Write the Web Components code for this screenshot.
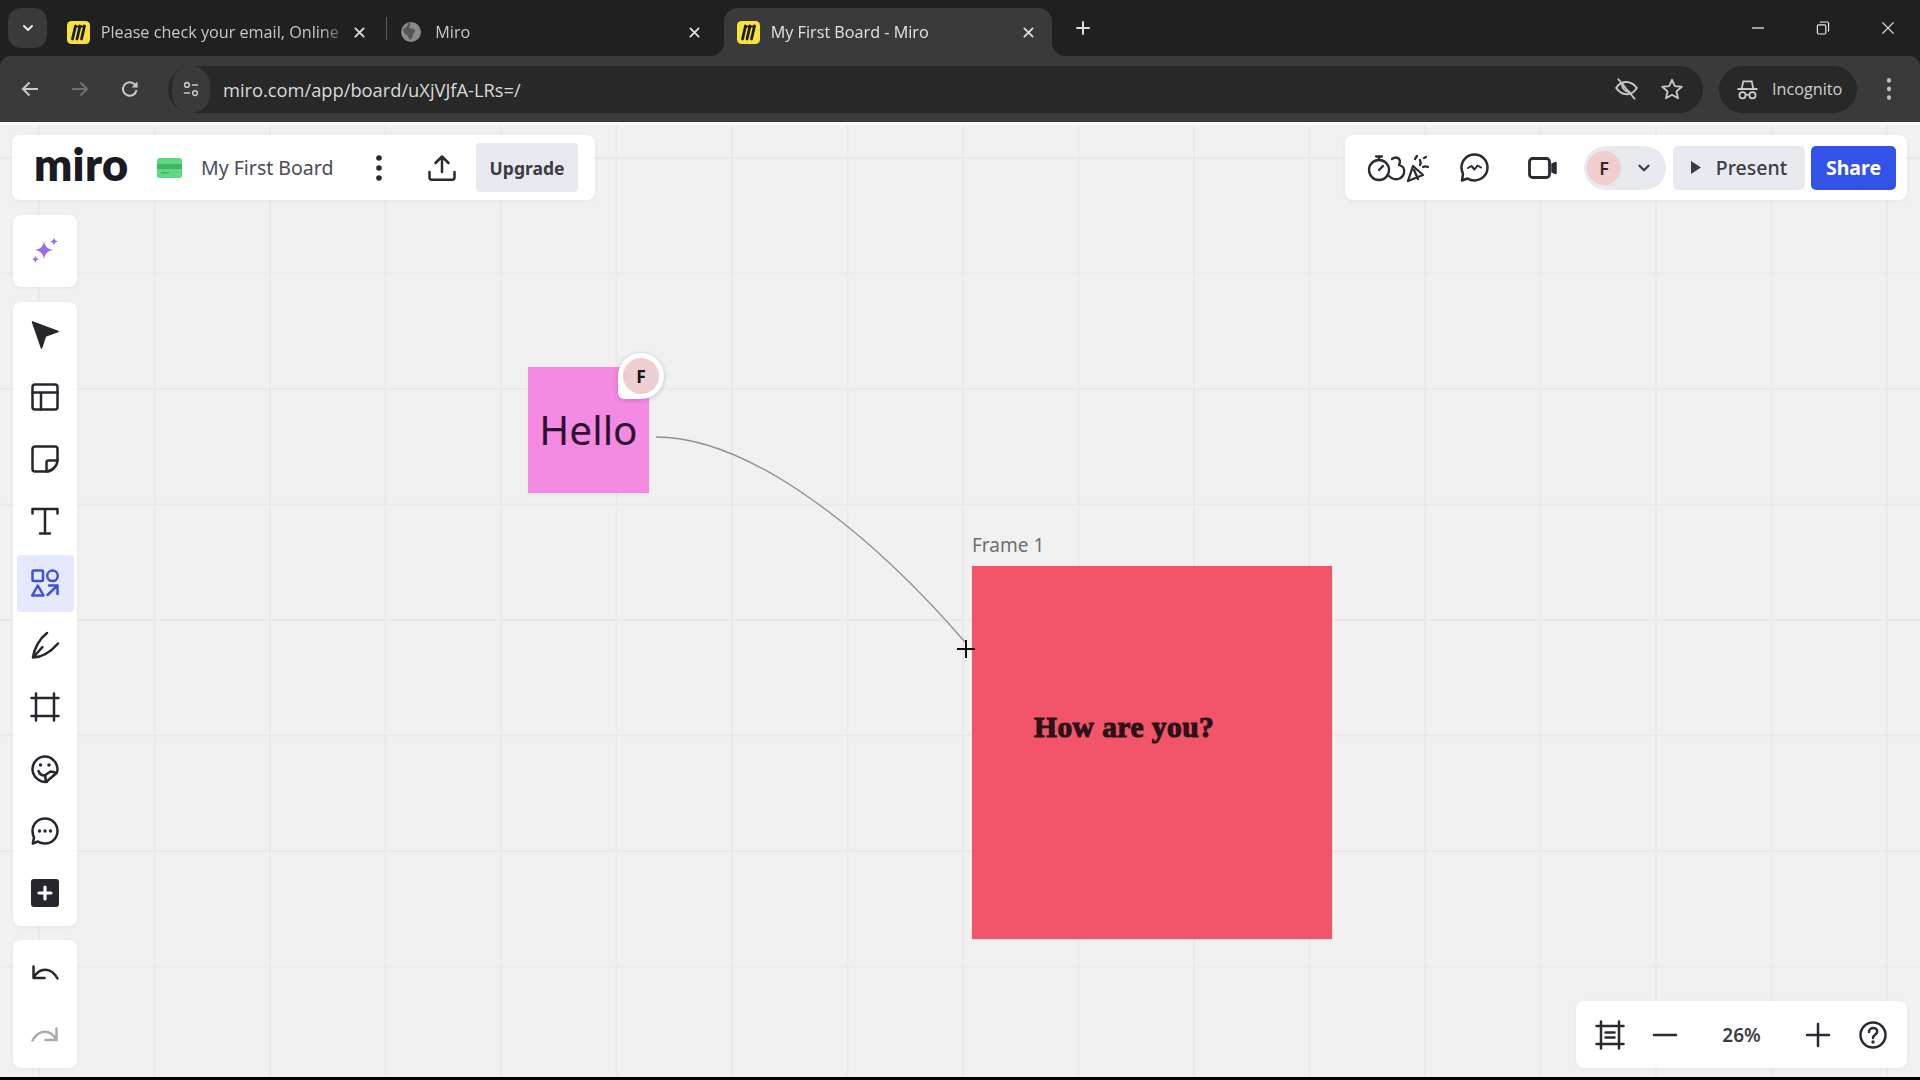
<!DOCTYPE html>
<html lang="en"><head><meta charset="utf-8"><title>My First Board - Miro</title>
<style>
html,body{margin:0;padding:0;height:100%;background:#000;overflow:hidden}
body{display:flex;flex-direction:column;width:1920px;height:1080px;font-family:"Noto Sans","Open Sans",sans-serif}
</style></head><body>
<browser-frame></browser-frame>
<miro-board></miro-board>
<screen-edge></screen-edge>
<script>
const S='fill="none" stroke="currentColor" stroke-width="2.5" stroke-linecap="round" stroke-linejoin="round"';
const ICONS={
 chevron:['0 0 20 20',`<path d="M5 7.5l5 5 5-5" ${S}/>`],
 x:['0 0 20 20',`<path d="M4.5 4.5l11 11M15.5 4.5l-11 11" ${S}/>`],
 plusThin:['0 0 20 20',`<path d="M10 2.5v15M2.5 10h15" ${S}/>`],
 minimize:['0 0 20 20',`<path d="M2.5 10h15" fill="none" stroke="currentColor" stroke-width="1.6"/>`],
 restore:['0 0 20 20',`<g fill="none" stroke="currentColor" stroke-width="1.5"><rect x="3" y="6" width="10.5" height="11.5" rx="1.5"/><path d="M6.5 3.5a1 1 0 0 1 1-1h8a1.5 1.5 0 0 1 1.500 1.500v9a1 1 0 0 1-1 1"/></g>`],
 close:['0 0 20 20',`<path d="M3 3l14 14M17 3L3 17" fill="none" stroke="currentColor" stroke-width="1.6"/>`],
 back:['0 0 20 20',`<path d="M18 10H3M9.500 3.500L3 10l6.500 6.500" fill="none" stroke="currentColor" stroke-width="2"/>`],
 forward:['0 0 20 20',`<path d="M2 10h15M10.500 3.500L17 10l-6.500 6.500" fill="none" stroke="currentColor" stroke-width="2"/>`],
 reload:['0 0 20 20',`<path d="M16.500 11a6.800 6.800 0 1 1-1.600-5.500L17 8" fill="none" stroke="currentColor" stroke-width="2"/><path d="M17.500 2.500V8.500H11.500z" fill="currentColor"/>`],
 tune:['0 0 20 20',`<g fill="none" stroke="currentColor" stroke-width="1.700"><circle cx="5.500" cy="5.500" r="2.600"/><path d="M11 5.500h7M2 14.500h7"/><circle cx="14.500" cy="14.500" r="2.600"/></g>`],
 eyeoff:['0 0 24 24',`<g fill="none" stroke="currentColor" stroke-width="1.800" stroke-linecap="round"><path d="M2 11c4-6.500 13-8 19 0-4 7-13 8.500-19 0z"/><path d="M8 6.500c-1.500 3.500 2 8.500 6 8"/><path d="M4 3l15 18"/></g>`],
 star:['0 0 24 24',`<path d="M12 2.800l2.800 6.300 6.900.7-5.200 4.600 1.500 6.800-6-3.500-6 3.500 1.500-6.800-5.200-4.600 6.900-.7z" fill="none" stroke="currentColor" stroke-width="1.900" stroke-linejoin="round"/>`],
 incognito:['0 0 24 24',`<g fill="none" stroke="currentColor" stroke-width="1.800"><path d="M6 11l1.600-7.500h8.800L18 11"/><path d="M1.500 11.500h21" stroke-width="2"/><circle cx="6.800" cy="18" r="3.200"/><circle cx="17.200" cy="18" r="3.200"/><path d="M10 17.500h4"/></g>`],
 dots:['0 0 8 28',`<g fill="currentColor"><circle cx="4" cy="4" r="2.800"/><circle cx="4" cy="14" r="2.800"/><circle cx="4" cy="24" r="2.800"/></g>`],
 upload:['0 0 28 26',`<path d="M14 17V2M7.500 8L14 1.500 20.500 8M1.500 17v5.500a2.200 2.200 0 0 0 2.200 2.200h20.600a2.200 2.200 0 0 0 2.200-2.200V17" ${S}/>`],
 sparkle:['0 0 28 28',`<g fill="#9a6cf5"><path d="M13 4c1 5.500 3.500 8 9 9-5.500 1-8 3.500-9 9-1-5.500-3.500-8-9-9 5.500-1 8-3.500 9-9z"/><path d="M23 0.500c.4 2.500 1.500 3.600 4 4-2.500.4-3.600 1.500-4 4-.4-2.500-1.500-3.600-4-4 2.500-.4 3.600-1.500 4-4z"/><path d="M4.500 18.500c.4 2.300 1.400 3.300 3.700 3.700-2.300.4-3.300 1.400-3.700 3.700-.4-2.300-1.400-3.300-3.700-3.700 2.300-.4 3.300-1.400 3.700-3.700z"/></g>`],
 cursor:['0 0 28 28',`<path d="M1.500 1L27 10.500 14.500 15 10.500 27z" fill="currentColor" stroke="currentColor" stroke-width="1.500" stroke-linejoin="round"/>`],
 template:['0 0 28 28',`<g ${S}><rect x="1.500" y="1.500" width="25" height="25" rx="2.500"/><path d="M1.500 9.500h25M10 9.500v17"/></g>`],
 sticky:['0 0 28 28',`<g ${S}><path d="M4 1.500h20a2.500 2.500 0 0 1 2.500 2.500v11c0 6-5.500 11.500-11.500 11.500H4A2.500 2.500 0 0 1 1.500 24V4A2.500 2.500 0 0 1 4 1.500z"/><path d="M26.500 15.500H17.500a2 2 0 0 0-2 2v9"/></g>`],
 text:['0 0 28 28',`<path d="M1.500 6.500V2h25v4.500M14 2v24M9 26.500h10" ${S}/>`],
 shapes:['0 0 28 28',`<g ${S}><rect x="1.500" y="1.500" width="10.500" height="10.500" rx="1"/><circle cx="21.500" cy="6.800" r="5.300"/><path d="M6.800 16.500l5.700 10H1.200z"/><path d="M16.500 26L26.500 16.500M18 16.500h8.500V25"/></g>`],
 pen:['0 0 28 28',`<path d="M2 26.500C3 18 8 8 16 2M2 26.500c9 0 18-6 25-14M2 26.500l9.500-10.500" ${S}/>`],
 frame:['0 0 28 28',`<path d="M5 0.500v27M23 0.500v27M0.500 5h27M0.500 23h27" ${S}/>`],
 sticker:['0 0 28 28',`<g ${S}><path d="M15 27C7.500 27 1.500 21 1.500 14S7.500 1.500 14 1.500 26.500 7.500 26.500 14c0 1.500-.2 2.500-.6 3.700L15 27z"/><path d="M7.500 16c1 3 3.500 4.500 6 4.500l6-4 5 1"/><path d="M14.500 20.500c-.5 3 0 5 1.500 6.200"/></g><circle cx="9.500" cy="10" r="1.700" fill="currentColor"/><circle cx="18" cy="10" r="1.700" fill="currentColor"/>`],
 comment:['0 0 28 28',`<path d="M14 1.500C21 1.500 26.500 7 26.500 14S21 26.500 14 26.500c-3 0-5.500-.8-7-2L1.800 26.500 3 20.500C2 18.500 1.500 16.500 1.500 14 1.500 7 7 1.500 14 1.500z" ${S}/><g fill="currentColor"><circle cx="8.500" cy="14" r="1.700"/><circle cx="14" cy="14" r="1.700"/><circle cx="19.500" cy="14" r="1.700"/></g>`],
 plusbox:['0 0 28 28',`<rect width="28" height="28" rx="3" fill="currentColor"/><path d="M14 8v12M8 14h12" stroke="#fff" stroke-width="3.200" stroke-linecap="round"/>`],
 undo:['0 0 28 28',`<path d="M2.500 7.500V19h11M2.500 18.500C9 8 20 8 26.500 19.500" ${S}/>`],
 redo:['0 0 28 28',`<path d="M25.500 7.500V19h-11M25.500 18.500C19 8 8 8 1.500 19.500" ${S}/>`],
 fit:['0 0 28 28',`<path d="M5 0.500v27M23 0.500v27M0.500 5h27M0.500 23h27M9.500 11.500h9M9.500 16.500h9" ${S}/>`],
 minus:['0 0 28 28',`<path d="M3 14h22" ${S}/>`],
 plus:['0 0 28 28',`<path d="M3 14h22M14 3v22" ${S}/>`],
 help:['0 0 28 28',`<circle cx="14" cy="14" r="12.500" ${S}/><path d="M10 11c0-2.500 2-4 4.200-4 2.300 0 4 1.500 4 3.500 0 3.300-4.200 3.200-4.200 6.500" ${S}/><circle cx="14" cy="21" r="1.700" fill="currentColor"/>`],
 reactions:['0 0 61 28',`<g fill="none" stroke="currentColor" stroke-width="2.300" stroke-linecap="round" stroke-linejoin="round"><circle cx="11" cy="16" r="10"/><path d="M11 6V2.500M8 2.500h6M11 16l4-4"/><path d="M24 5c4-3 8-1 8 3l-1 3c4 1 6 4 5 8-1 5-6 7-10 6-2-.5-4-2-5-3"/><path d="M40 27l5-15 10 9zM46 16l4 9M52 11c1-2 1-3 0-5M55 13c2-1 3-1 5 0"/><path d="M47 5l2-3M56 4l2-1"/></g>`],
 chat:['0 0 29 29',`<path d="M14.500 1.500c7.300 0 13 5.700 13 13s-5.700 13-13 13c-2.500 0-5-.7-7-2l-5.500 2 1-6.500c-.800-2-1.500-4-1.500-6.500 0-7.300 5.700-13 13-13z" ${S}/><path d="M8 15l3.500-2 3 3.500 3-4 3.500 2" fill="none" stroke="currentColor" stroke-width="2" stroke-linecap="round" stroke-linejoin="round"/>`],
 video:['0 0 29 22',`<rect x="1.500" y="1.500" width="20" height="19" rx="3" fill="none" stroke="currentColor" stroke-width="2.800"/><path d="M24 7l4-1.500v11L24 15z" fill="currentColor" stroke="currentColor" stroke-width="1.500" stroke-linejoin="round"/>`],
 play:['0 0 10 13',`<path d="M0 0l10 6.500L0 13z" fill="currentColor"/>`],
 boardmark:['0 0 25 20',`<rect width="25" height="20" rx="2.500" fill="#62d884"/><rect y="6" width="25" height="5" fill="#3fb565"/><rect x="4" y="14" width="8" height="1.500" fill="#3fb565"/>`],
 mirofav:['0 0 23 23',`<rect width="23" height="23" rx="4.500" fill="#f6e33b"/><path d="M8.500 5L5.500 18M13 5l-3 13M17.500 5l-3 13" stroke="#1d1a10" stroke-width="2.800" stroke-linecap="round" fill="none"/><path d="M7 5.500h11" stroke="#1d1a10" stroke-width="1.800"/>`],
 globe:['0 0 20 20',`<circle cx="10" cy="10" r="10" fill="#8a8a8a"/><path d="M2 7c3-1 5-4 6-6.500 2 .5 2 3 0 4.500 1 2 5 1 6 3.500 1 2-2 2-2 4.500 0 2-2 5-3.500 5-.5-2-1-4-3-5-2-1-3.500-3-3.500-5.500z" fill="#555"/>`]
};
class UiIcon extends HTMLElement{
 connectedCallback(){
  const n=this.getAttribute('name'),w=this.getAttribute('w')||28,h=this.getAttribute('h')||w;
  const [vb,body]=ICONS[n];
  const r=this.shadowRoot||this.attachShadow({mode:'open'});
  r.innerHTML=`<style>:host{display:inline-flex;flex:none;line-height:0}svg{display:block;overflow:visible}</style><svg width="${w}" height="${h}" viewBox="${vb}" preserveAspectRatio="none">${body}</svg>`;
 }
}
customElements.define('ui-icon',UiIcon);

class ChromeTab extends HTMLElement{
 constructor(){super();const r=this.attachShadow({mode:'open'});
  r.innerHTML=`<style>
  :host{display:flex;align-items:center;flex:none;width:328px;height:48px;box-sizing:border-box;padding:0 13px 0 12px;position:relative;color:#c8c8c8;font:16.2px "Open Sans","Noto Sans",sans-serif;border-radius:14px 14px 0 0}
  :host([active]){background:#3a3a3a;color:#e2e2e2;padding-left:13px}
  :host([active])::before,:host([active])::after{content:"";position:absolute;bottom:0;width:14px;height:14px}
  :host([active])::before{left:-14px;background:radial-gradient(circle at 0 0,transparent 14px,#3a3a3a 14.5px)}
  :host([active])::after{right:-14px;background:radial-gradient(circle at 100% 0,transparent 14px,#3a3a3a 14.5px)}
  .t{flex:1;min-width:0;margin-left:11px;white-space:nowrap;overflow:hidden;-webkit-mask-image:linear-gradient(90deg,#000 88%,transparent 100%);mask-image:linear-gradient(90deg,#000 88%,transparent 100%)}
  .x{flex:none;color:#dcdcdc;width:20px;display:flex;justify-content:center}
  </style><slot name="icon"></slot><span class="t"><slot></slot></span><span class="x"><ui-icon name="x" w="15"></ui-icon></span>`;}
}
customElements.define('chrome-tab',ChromeTab);

class BrowserFrame extends HTMLElement{
 constructor(){super();const r=this.attachShadow({mode:'open'});
  r.innerHTML=`<style>
  :host{display:block;flex:none;background:#202020;font-family:"Open Sans","Noto Sans",sans-serif}
  .strip{height:56px;display:flex;align-items:flex-end;padding-left:8px;box-sizing:border-box;gap:2.75px}
  .drop{width:39px;height:40px;margin:0 5px 8px 0;background:#3a3a3a;border-radius:13px;display:flex;align-items:center;justify-content:center;color:#e8e8e8;flex:none}
  .sep{flex:none;width:1px;height:23px;background:#5c5c5c;margin-bottom:16px}
  .sep.hidden{background:none}
  .new{flex:none;margin:0 0 20px 20px;color:#dddddd;width:16px;display:flex}
  .win{margin-left:auto;display:flex;align-self:stretch;color:#e6e6e6}
  .win span{width:65px;display:flex;align-items:center;justify-content:center}
  .bar{height:66px;box-sizing:border-box;background:#3a3a3a;border-radius:10px 10px 0 0;display:flex;align-items:center;color:#c9c9c9;position:relative}
  .nav{width:50px;flex:none;display:flex;justify-content:center}
  .nav:first-child{margin-left:5px}
  .omni{flex:none;width:1535px;height:47px;margin-left:13px;background:#282828;border-radius:24px;display:flex;align-items:center;box-sizing:border-box}
  .chip{flex:none;width:38px;height:47px;margin-left:0;border-radius:24px;background:#3a3a3a;display:flex;align-items:center;justify-content:center;margin-right:13px;margin-left:4px;color:#d4d4d4}
  .url{font-size:18.3px;color:#dadada;letter-spacing:0;white-space:nowrap;flex:1}
  .omni ui-icon{color:#c6c6c6}
  .eye{margin-right:20px}.star{margin-right:19px}
  .inc{flex:none;margin-left:16px;width:138px;height:47px;border-radius:24px;background:#282828;display:flex;align-items:center;box-sizing:border-box;padding-left:17px;color:#cfcfcf;font-size:16.2px;gap:13px}
  .more{flex:none;margin-left:22px;width:19px;color:#bdbdbd;display:flex;justify-content:center}
  </style>
  <div class="strip">
   <span class="drop"><ui-icon name="chevron" w="16"></ui-icon></span>
   <chrome-tab><ui-icon slot="icon" name="mirofav" w="23"></ui-icon>Please check your email, Online</chrome-tab>
   <span class="sep"></span>
   <chrome-tab><ui-icon slot="icon" name="globe" w="20" style="margin-right:3px"></ui-icon>Miro</chrome-tab>
   <span class="sep hidden"></span>
   <chrome-tab active><ui-icon slot="icon" name="mirofav" w="23"></ui-icon>My First Board - Miro</chrome-tab>
   <span class="new"><ui-icon name="plusThin" w="16"></ui-icon></span>
   <span class="win"><span><ui-icon name="minimize" w="16"></ui-icon></span><span><ui-icon name="restore" w="16"></ui-icon></span><span><ui-icon name="close" w="16"></ui-icon></span></span>
  </div>
  <div class="bar">
   <span class="nav"><ui-icon name="back" w="20"></ui-icon></span>
   <span class="nav" style="color:#6f6f6f"><ui-icon name="forward" w="20"></ui-icon></span>
   <span class="nav"><ui-icon name="reload" w="20"></ui-icon></span>
   <span class="omni" style="margin-left:13px">
    <span class="chip"><ui-icon name="tune" w="18"></ui-icon></span>
    <span class="url">miro.com/app/board/uXjVJfA-LRs=/</span>
    <ui-icon class="eye" name="eyeoff" w="26"></ui-icon>
    <ui-icon class="star" name="star" w="24"></ui-icon>
   </span>
   <span class="inc"><ui-icon name="incognito" w="23"></ui-icon>Incognito</span>
   <span class="more"><ui-icon name="dots" w="6" h="24"></ui-icon></span>
  </div>`;}
}
customElements.define('browser-frame',BrowserFrame);

class FloatPanel extends HTMLElement{
 constructor(){super();this.attachShadow({mode:'open'}).innerHTML=`<style>
  :host{display:flex;align-items:center;background:#fff;border-radius:8px;box-shadow:0 1px 4px rgba(0,0,0,.05);box-sizing:border-box;color:#2a2a33}
  :host([column]){flex-direction:column;width:64px;padding:2px 0}
  </style><slot></slot>`;}
}
customElements.define('float-panel',FloatPanel);

class ToolBtn extends HTMLElement{
 constructor(){super();this.attachShadow({mode:'open'}).innerHTML=`<style>
  :host{display:flex;flex:none;width:57px;height:57px;margin:2.500px 0;align-items:center;justify-content:center;border-radius:4px;color:#26262e}
  :host([active]){background:#e6e8fb;color:#3f51d6}
  :host([muted]){color:#a9a9ae}
  </style><slot></slot>`;}
 connectedCallback(){if(!this.firstChild){const i=document.createElement('ui-icon');i.setAttribute('name',this.getAttribute('icon'));this.append(i);}}
}
customElements.define('tool-btn',ToolBtn);

class PillBtn extends HTMLElement{
 constructor(){super();this.attachShadow({mode:'open'}).innerHTML=`<style>
  :host{display:flex;flex:none;height:44px;align-items:center;justify-content:center;border-radius:5px;background:#e9eaef;color:#3c3c46;font:600 19.500px "Noto Sans",sans-serif;box-sizing:border-box}
  :host([primary]){background:#3552e8;color:#fff;font-weight:700}
  </style><slot></slot>`;}
}
customElements.define('pill-btn',PillBtn);

class MiroBoard extends HTMLElement{
 constructor(){super();this.attachShadow({mode:'open'}).innerHTML=`<style>
  :host{display:block;flex:1;min-height:0;position:relative;overflow:hidden;background-color:#f1f1f1;
   background-image:linear-gradient(90deg,#eaeaea 2px,transparent 2px),linear-gradient(#eaeaea 2px,transparent 2px);
   background-size:115.500px 115.500px;background-position:38px 32px;border-top:3px solid #fbfbfb;box-sizing:border-box;font-family:"Noto Sans",sans-serif}
  .canvas{position:absolute;inset:-3px 0 0 0}
  .canvas svg{position:absolute;left:0;top:0}
  .sticky{position:absolute;left:528px;top:245px;width:121px;height:126px;background:#f48ae1;box-shadow:0 2px 4px rgba(0,0,0,.06);display:flex;align-items:center;justify-content:center;font-size:40.500px;color:#2b1230;line-height:1}
  .flabel{position:absolute;left:972px;top:410px;font-size:19px;color:#6e6e70;line-height:26px}
  .frame{position:absolute;left:972px;top:444px;width:360px;height:373px;background:#f25469;box-sizing:border-box;padding:141px 0 0 62px;box-shadow:0 0 1px rgba(0,0,0,.3)}
  .fat{font:700 29.500px/40px "Liberation Serif",serif;color:#2a1216;-webkit-text-stroke:1.100px #2a1216;letter-spacing:.45px;white-space:nowrap}
  .cursor{position:absolute;left:618px;top:231px;width:46px;height:46px;border-radius:50% 50% 50% 6px;background:#fff;box-shadow:0 1px 5px rgba(0,0,0,.2);display:flex;align-items:center;justify-content:center}
  .cursor span{width:36px;height:36px;border-radius:50%;background:#edcfd3;display:flex;align-items:center;justify-content:center;font:700 17.500px "Noto Sans",sans-serif;color:#111}
  .ui{position:absolute;inset:-3px 0 0 0;box-sizing:border-box;padding:13px 13px 13px 12px;display:grid;grid-template-columns:auto 1fr;grid-template-rows:65px 1fr;row-gap:15px}
  .top{grid-column:1/3;display:flex;justify-content:space-between}
  .top float-panel{height:65px}
  .left{padding:0 17px 0 22px}
  .logo{font:800 45px/1 "Lato",sans-serif;color:#1a1a22;letter-spacing:.3px;width:91px;margin-right:32px;margin-top:-6px}
  .bname{margin:0 22px 0 19px;font-size:19.500px;color:#4b4b53;white-space:nowrap;width:136px}
  .dots{width:40px;display:flex;justify-content:center;color:#2a2a33}
  .up{margin-left:29px;margin-right:20px}
  .upgrade{width:102px;height:49px;font-size:17.500px;font-weight:700;border-radius:4px}
  .right{padding:0 11px 0 23px}
  .pill{width:82px;height:44px;border-radius:22px;background:#e9eaef;margin:0 7px 0 27px;display:flex;align-items:center;padding-left:3px;box-sizing:border-box}
  .av{width:34px;height:34px;border-radius:50%;background:#f1cdd0;display:flex;align-items:center;justify-content:center;font:600 18px "Noto Sans",sans-serif;color:#33262a}
  .pill ui-icon{margin-left:14px;color:#3c3c46}
  .rail{display:flex;flex-direction:column;gap:15px;margin-left:1px;grid-column:1}
  .rail float-panel:last-child{margin-top:-1px}
  .zoom{grid-column:2;justify-self:end;align-self:end;width:331px;height:67px;justify-content:space-between;padding:0 20px 0 20px}
  .zoom .pct{font:600 19px "Noto Sans",sans-serif;color:#3c3c46;width:70px;text-align:center}
  </style>
  <div class="canvas">
   <div class="sticky">Hello</div>
   <div class="flabel">Frame 1</div>
   <div class="frame"><div class="fat">How are you?</div></div>
   <svg width="1920" height="958" fill="none"><path d="M656 315C750 315 870 410 965 520" stroke="#8f8f8f" stroke-width="1.300"/><path d="M957 527H975M966 518V536" stroke="#111" stroke-width="2"/></svg>
   <div class="cursor"><span>F</span></div>
  </div>
  <div class="ui">
   <div class="top">
    <float-panel class="left">
     <span class="logo">miro</span>
     <ui-icon name="boardmark" w="25" h="20"></ui-icon>
     <span class="bname">My First Board</span>
     <span class="dots"><ui-icon name="dots" w="8" h="28"></ui-icon></span>
     <ui-icon class="up" name="upload" w="28" h="26"></ui-icon>
     <pill-btn class="upgrade">Upgrade</pill-btn>
    </float-panel>
    <float-panel class="right">
     <ui-icon name="reactions" w="61" h="28" style="margin-right:31px"></ui-icon>
     <ui-icon name="chat" w="29" style="margin-right:39px"></ui-icon>
     <ui-icon name="video" w="29" h="22"></ui-icon>
     <span class="pill"><span class="av">F</span><ui-icon name="chevron" w="18"></ui-icon></span>
     <pill-btn style="width:132px;font-weight:500;gap:15px"><ui-icon name="play" w="10" h="13"></ui-icon>Present</pill-btn>
     <pill-btn primary style="width:85px;margin-left:6px">Share</pill-btn>
    </float-panel>
   </div>
   <div class="rail">
    <float-panel column><tool-btn icon="sparkle" style="margin:5.500px 0"></tool-btn></float-panel>
    <float-panel column>
     <tool-btn icon="cursor"></tool-btn><tool-btn icon="template"></tool-btn><tool-btn icon="sticky"></tool-btn><tool-btn icon="text"></tool-btn><tool-btn icon="shapes" active></tool-btn><tool-btn icon="pen"></tool-btn><tool-btn icon="frame"></tool-btn><tool-btn icon="sticker"></tool-btn><tool-btn icon="comment"></tool-btn><tool-btn icon="plusbox"></tool-btn>
    </float-panel>
    <float-panel column><tool-btn icon="undo"></tool-btn><tool-btn icon="redo" muted></tool-btn></float-panel>
   </div>
   <float-panel class="zoom">
    <ui-icon name="fit"></ui-icon><ui-icon name="minus"></ui-icon><span class="pct">26%</span><ui-icon name="plus"></ui-icon><ui-icon name="help"></ui-icon>
   </float-panel>
  </div>`;}
}
customElements.define('miro-board',MiroBoard);

class ScreenEdge extends HTMLElement{
 constructor(){super();this.attachShadow({mode:'open'}).innerHTML=`<style>:host{display:block;flex:none;height:3px;background:#000}</style>`;}
}
customElements.define('screen-edge',ScreenEdge);
</script>
</body></html>
